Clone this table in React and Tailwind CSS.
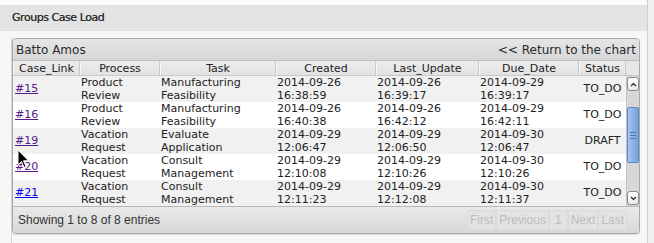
import React from "react";

const rows = [
  { id: "#15", visited: true, p: ["Product", "Review"], t: ["Manufacturing", "Feasibility"], c: ["2014-09-26", "16:38:59"], u: ["2014-09-26", "16:39:17"], d: ["2014-09-29", "16:39:17"], s: "TO_DO" },
  { id: "#16", visited: true, p: ["Product", "Review"], t: ["Manufacturing", "Feasibility"], c: ["2014-09-26", "16:40:38"], u: ["2014-09-26", "16:42:12"], d: ["2014-09-29", "16:42:11"], s: "TO_DO" },
  { id: "#19", visited: true, p: ["Vacation", "Request"], t: ["Evaluate", "Application"], c: ["2014-09-29", "12:06:47"], u: ["2014-09-29", "12:06:50"], d: ["2014-09-30", "12:06:47"], s: "DRAFT" },
  { id: "#20", visited: true, p: ["Vacation", "Request"], t: ["Consult", "Management"], c: ["2014-09-29", "12:10:08"], u: ["2014-09-29", "12:10:26"], d: ["2014-09-30", "12:10:26"], s: "TO_DO" },
  { id: "#21", visited: false, p: ["Vacation", "Request"], t: ["Consult", "Management"], c: ["2014-09-29", "12:11:23"], u: ["2014-09-29", "12:12:08"], d: ["2014-09-30", "12:11:37"], s: "TO_DO" },
];

const headers = ["Case_Link", "Process", "Task", "Created", "Last_Update", "Due_Date", "Status"];

function Two({ v }) {
  return (
    <div className="flex flex-col pl-[1px] leading-[13px]">
      <span>{v[0]}</span>
      <span>{v[1]}</span>
    </div>
  );
}

export default function App() {
  return (
    <div className="relative w-[654px] h-[243px] overflow-hidden bg-[#f0f0f0] font-['DejaVu_Sans',sans-serif] text-[11px] text-[#222]">
      <div className="w-[648px] h-[243px] flex flex-col border-r border-[#cfcfcf] bg-[#f7f7f7]">
        <div className="h-[5px] bg-[#fbfbfb]"></div>
        <div className="h-[26px] bg-[#e4e4e4] flex items-center pl-[12px] text-[11px] tracking-[-0.45px] text-[#333] [text-shadow:0_0_0.4px_#333]">
          Groups Case Load
        </div>
        <div className="flex-1 pl-[11px] pt-[7px]">
          <div className="h-full border-l border-[#d6d6d6]">
            <div className="w-[628px] border border-[#a9a9a9] rounded-[4px] bg-[#e9e9e9] shadow-[0_1px_1px_rgba(0,0,0,0.12)]">
              {/* panel header */}
              <div className="h-[22px] flex items-center justify-between px-[3px] text-[12px] text-[#2a2a2a] bg-gradient-to-b from-[#e6e6e6] to-[#d6d6d6] rounded-t-[4px] border-b border-[#bdbdbd]">
                <span>Batto Amos</span>
                <span>&lt;&lt; Return to the chart</span>
              </div>
              {/* column headers */}
              <div className="flex h-[15px] bg-[#e6e6e6] border-b border-[#c9c9c9]">
                <div className="grid grid-cols-[67px_80px_116px_100px_103px_100px_47px]">
                  {headers.map((h) => (
                    <div key={h} className="flex items-center justify-center border-r border-[#c9c9c9] border-l border-l-[#f6f6f6] bg-gradient-to-b from-[#ededed] to-[#e2e2e2] leading-[13px]">
                      {h}
                    </div>
                  ))}
                </div>
                <div className="w-[13px]"></div>
              </div>
              {/* body */}
              <div className="flex h-[130px] bg-white">
                <div className="flex flex-col w-[613px]">
                  {rows.map((r, i) => (
                    <div key={r.id} className={`grid grid-cols-[67px_80px_116px_100px_103px_100px_47px] h-[26px] items-center ${i % 2 === 0 ? "bg-[#f1f1f1]" : "bg-white"}`}>
                      <div className="pl-[2px]">
                        <a href="#" className={`underline ${r.visited ? "text-[#551a8b]" : "text-[#0000ee]"}`}>{r.id}</a>
                      </div>
                      <Two v={r.p} />
                      <Two v={r.t} />
                      <Two v={r.c} />
                      <Two v={r.u} />
                      <Two v={r.d} />
                      <div className="text-center">{r.s}</div>
                    </div>
                  ))}
                </div>
                {/* scrollbar */}
                <div className="w-[13px] flex flex-col bg-[#d7d7d7] border-l border-[#c4c4c4]">
                  <div className="mt-[1px] h-[14px] rounded-[3px] border border-[#8a8a8a] bg-gradient-to-b from-[#ffffff] to-[#e9e9e9] flex items-center justify-center">
                    <svg width="7" height="5" viewBox="0 0 7 5"><path d="M1 4 L3.5 1.5 L6 4" stroke="#222" strokeWidth="1.2" fill="none" /></svg>
                  </div>
                  <div className="flex-1 relative">
                    <div className="absolute left-0 right-0 top-[16px] h-[56px] rounded-[2px] border border-[#5a86c4] bg-gradient-to-r from-[#a9c5ec] via-[#8cb1e3] to-[#7aa3dc] flex items-center justify-center">
                      <div className="flex flex-col gap-[2px] w-[6px]">
                        <div className="h-[1px] bg-[#4d76b0]"></div>
                        <div className="h-[1px] bg-[#4d76b0]"></div>
                        <div className="h-[1px] bg-[#4d76b0]"></div>
                      </div>
                    </div>
                  </div>
                  <div className="mb-[1px] h-[14px] rounded-[3px] border border-[#8a8a8a] bg-gradient-to-b from-[#ffffff] to-[#e9e9e9] flex items-center justify-center">
                    <svg width="7" height="5" viewBox="0 0 7 5"><path d="M1 1 L3.5 3.5 L6 1" stroke="#222" strokeWidth="1.2" fill="none" /></svg>
                  </div>
                </div>
              </div>
              {/* footer */}
              <div className="h-[27px] flex items-center justify-between pl-[5px] pr-[12px] border-t border-[#b8b8b8] rounded-b-[4px] bg-gradient-to-b from-[#e9e9e9] to-[#d8d8d8] font-['Liberation_Sans',sans-serif] text-[12px]">
                <span className="text-[#333]">Showing 1 to 8 of 8 entries</span>
                <div className="flex text-[#bdbdbd]">
                  <span className="px-[2px] border border-[#dadada] bg-[#e3e3e3]">First</span>
                  <span className="px-[2px] border border-[#dadada] bg-[#e3e3e3]">Previous</span>
                  <span className="px-[5px] border border-[#dadada] bg-[#e3e3e3]">1</span>
                  <span className="px-[2px] border border-[#dadada] bg-[#e3e3e3]">Next</span>
                  <span className="px-[2px] border border-[#dadada] bg-[#e3e3e3]">Last</span>
                </div>
              </div>
            </div>
          </div>
        </div>
      </div>
      {/* mouse cursor */}
      <svg className="absolute left-[17px] top-[149px]" width="13" height="20" viewBox="0 0 13 20">
        <path d="M1 1 L1 16 L4.5 12.5 L7 18.5 L9 17.5 L6.5 11.8 L11.5 11.8 Z" fill="#000" stroke="#fff" strokeWidth="1" />
      </svg>
    </div>
  );
}
